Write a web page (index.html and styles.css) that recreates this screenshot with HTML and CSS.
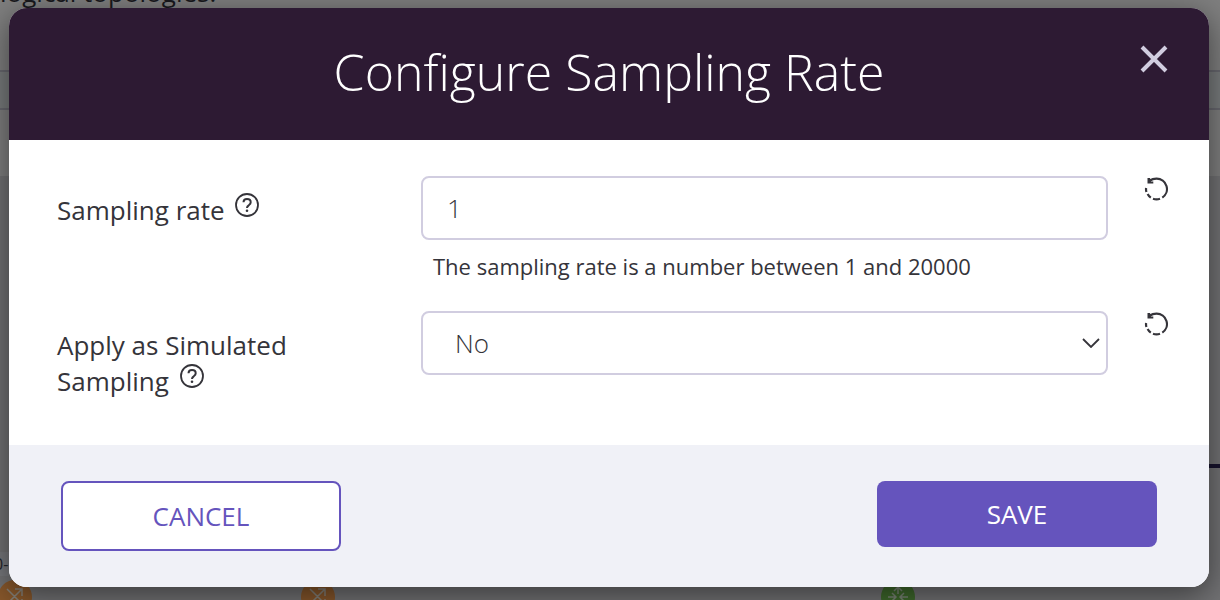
FILE: index.html
```
<!DOCTYPE html>
<html lang="en">
<head>
    <meta charset="UTF-8">
    <meta name="viewport" content="width=device-width, initial-scale=1.0">
    <title>Configure Sampling Rate</title>
    <link rel="stylesheet" href="styles.css">
</head>
<body>
    <!-- Topology page under the overlay -->
    <div class="topology">
        <p class="intro">logical topologies.</p>
        <div class="toolbar"></div>
        <div class="link-line"></div>
        <span class="node-label">0-</span>
        <svg class="node node-switch-1" viewBox="0 0 34 34">
            <circle cx="17" cy="17" r="17" fill="#87572b"/>
            <path d="M9 9l17 17M8 25L24 9M17 9h7v7M24 19v7h-7" fill="none" stroke="#858078" stroke-width="1.5"/>
        </svg>
        <svg class="node node-switch-2" viewBox="0 0 34 34">
            <circle cx="17" cy="17" r="17" fill="#87572b"/>
            <path d="M9 9l17 17M8 25L24 9M17 9h7v7M24 19v7h-7" fill="none" stroke="#858078" stroke-width="1.5"/>
        </svg>
        <svg class="node node-router" viewBox="0 0 34 34">
            <circle cx="17" cy="17" r="17" fill="#3f6a2c"/>
            <path d="M17 14V7M13 11l4-4 4 4M7 17h7M11 13l4 4-4 4M27 17h-7M23 13l-4 4 4 4M17 20v7" fill="none" stroke="#7b8576" stroke-width="1.5"/>
        </svg>
    </div>

    <div class="overlay">
        <form class="modal" role="dialog" aria-labelledby="modalTitle">
            <header class="modal-header">
                <h1 id="modalTitle">Configure Sampling Rate</h1>
                <button type="button" class="close" aria-label="Close">
                    <svg width="28" height="28" viewBox="0 0 28 28">
                        <path d="M2 2l24 24M26 2L2 26" fill="none" stroke="#d1cde0" stroke-width="4"/>
                    </svg>
                </button>
            </header>

            <div class="modal-body">
                <div class="form-row">
                    <label for="samplingRate">Sampling rate
                        <svg class="help" viewBox="0 0 24 24">
                            <circle cx="12" cy="12" r="11" fill="none" stroke="#35343a" stroke-width="1.8"/>
                            <path d="M8.500 9.300C8.500 7 10 6 12 6s3.700 1.200 3.700 3.200c0 1.700-1 2.300-2 3.100-1.200.8-1.700 1.300-1.700 2.700" fill="none" stroke="#35343a" stroke-width="2"/>
                            <circle cx="12" cy="17.800" r="1.300" fill="#35343a"/>
                        </svg>
                    </label>
                    <div class="field">
                        <input type="text" id="samplingRate" value="1" aria-describedby="rateHint">
                        <p class="hint" id="rateHint">The sampling rate is a number between 1 and 20000</p>
                    </div>
                    <button type="button" class="reset" aria-label="Reset sampling rate">
                        <svg width="24" height="24" viewBox="0 0 24 24">
                            <path d="M6 3.500C8 2 10 1.700 12.500 1.700A10.300 10.300 0 0 1 18.300 20.600" fill="none" stroke="#35343a" stroke-width="2.200"/>
                            <path d="M16 21.700a10.300 10.300 0 0 1-7 0M6.800 20.600a10.300 10.300 0 0 1-3.200-3.600M2.400 15a10.300 10.300 0 0 1-.3-4" fill="none" stroke="#35343a" stroke-width="2.200"/>
                            <path d="M3.500 1v5.600H9.300V4.600H7L6 1z" fill="#35343a"/>
                        </svg>
                    </button>
                </div>

                <div class="form-row">
                    <label for="simulated">Apply as Simulated Sampling
                        <svg class="help" viewBox="0 0 24 24">
                            <circle cx="12" cy="12" r="11" fill="none" stroke="#35343a" stroke-width="1.8"/>
                            <path d="M8.500 9.300C8.500 7 10 6 12 6s3.700 1.200 3.700 3.200c0 1.700-1 2.300-2 3.100-1.200.8-1.700 1.300-1.700 2.700" fill="none" stroke="#35343a" stroke-width="2"/>
                            <circle cx="12" cy="17.800" r="1.300" fill="#35343a"/>
                        </svg>
                    </label>
                    <div class="field select-field">
                        <select id="simulated">
                            <option selected>No</option>
                            <option>Yes</option>
                        </select>
                        <svg class="chevron" viewBox="0 0 18 10">
                            <path d="M1 1l8 8 8-8" fill="none" stroke="#35343a" stroke-width="1.8"/>
                        </svg>
                    </div>
                    <button type="button" class="reset" aria-label="Reset simulated sampling">
                        <svg width="24" height="24" viewBox="0 0 24 24">
                            <path d="M6 3.500C8 2 10 1.700 12.500 1.700A10.300 10.300 0 0 1 18.300 20.600" fill="none" stroke="#35343a" stroke-width="2.200"/>
                            <path d="M16 21.700a10.300 10.300 0 0 1-7 0M6.800 20.600a10.300 10.300 0 0 1-3.200-3.600M2.400 15a10.300 10.300 0 0 1-.3-4" fill="none" stroke="#35343a" stroke-width="2.200"/>
                            <path d="M3.500 1v5.600H9.300V4.600H7L6 1z" fill="#35343a"/>
                        </svg>
                    </button>
                </div>
            </div>

            <footer class="modal-footer">
                <button type="button" class="btn btn-cancel">CANCEL</button>
                <button type="submit" class="btn btn-save">SAVE</button>
            </footer>
        </form>
    </div>
</body>
</html>
```

FILE: styles.css
```
* {
    box-sizing: border-box;
}

body {
    margin: 0;
    min-height: 100vh;
    background-color: #7f7f7f;
    color: #35343a;
    font-family: "Open Sans", sans-serif;
    font-size: 26px;
    line-height: 36px;
    overflow: hidden;
}

h1, p {
    margin: 0;
}

button, input, select {
    font: inherit;
    color: inherit;
}

/* Page under the overlay */
.topology {
    position: absolute;
    inset: 0;
    overflow: hidden;
    background: linear-gradient(#7f7f7f 176px, #727274 176px);
}

.intro {
    position: absolute;
    left: 0;
    top: -26px;
    color: #19191d;
    font-size: 26px;
}

.toolbar {
    position: absolute;
    top: 70px;
    left: 0;
    right: 0;
    height: 40px;
    border-top: 2px solid #68686f;
    border-bottom: 2px solid #68686f;
    background-color: #787b7c;
}

.link-line {
    position: absolute;
    right: 0;
    top: 464px;
    width: 50%;
    height: 4px;
    background-color: #17132d;
}

.node-label {
    position: absolute;
    left: -6px;
    top: 552px;
    padding-right: 8px;
    background-color: #77787c;
    color: #25252a;
    font-size: 16px;
    line-height: 24px;
}

.node {
    position: absolute;
    top: 580px;
    width: 34px;
    height: 34px;
}

.node-switch-1 {
    left: -2px;
}

.node-switch-2 {
    left: 301px;
}

.node-router {
    left: 881px;
}

/* Modal */
.overlay {
    position: relative;
    padding: 8px 11px 13px 9px;
}

.modal {
    border-radius: 18px;
    background-color: #fff;
    box-shadow: 0 8px 32px rgba(0, 0, 0, 0.5);
    overflow: hidden;
}

.modal-header {
    position: relative;
    padding: 28px 80px 32px;
    background-color: #2d1a33;
    color: #fff;
    text-align: center;
}

.modal-header h1 {
    font-size: 50px;
    font-weight: 300;
    line-height: 72px;
}

.close {
    position: absolute;
    top: 37px;
    right: 41px;
}

.close, .reset {
    display: block;
    padding: 0;
    border: none;
    background: none;
    cursor: pointer;
}

.reset {
    padding-top: 1px;
}

.close svg, .reset svg {
    display: block;
}

.modal-body {
    display: grid;
    gap: 27px;
    padding: 36px 41px 46px 48px;
}

.form-row {
    display: grid;
    grid-template-columns: 328px 1fr 24px;
    gap: 36px;
    align-items: start;
}

.form-row label {
    padding: 16px 60px 0 0;
}

.help {
    width: 24px;
    height: 24px;
    margin-left: 4px;
    vertical-align: 3px;
}

.field input, .field select {
    display: block;
    width: 100%;
    height: 64px;
    padding: 0 24px;
    border: 2px solid #d1cde0;
    border-radius: 8px;
    background-color: #fff;
    font-weight: 300;
}

.field select {
    appearance: none;
    padding: 0 32px;
}

.select-field {
    position: relative;
}

.chevron {
    position: absolute;
    top: 27px;
    right: 8px;
    width: 18px;
    height: 10px;
    pointer-events: none;
}

.hint {
    padding: 8px 12px 0;
    font-size: 22px;
}

.modal-footer {
    display: flex;
    justify-content: space-between;
    align-items: flex-start;
    padding: 36px 52px;
    background-color: #f0f1f7;
}

.btn {
    width: 280px;
    padding: 15px 0;
    border: none;
    border-radius: 8px;
    cursor: pointer;
}

.btn-cancel {
    border: 2px solid #6554bd;
    background-color: #fff;
    color: #6554bd;
}

.btn-save {
    background-color: #6554bd;
    color: #fff;
}
```
